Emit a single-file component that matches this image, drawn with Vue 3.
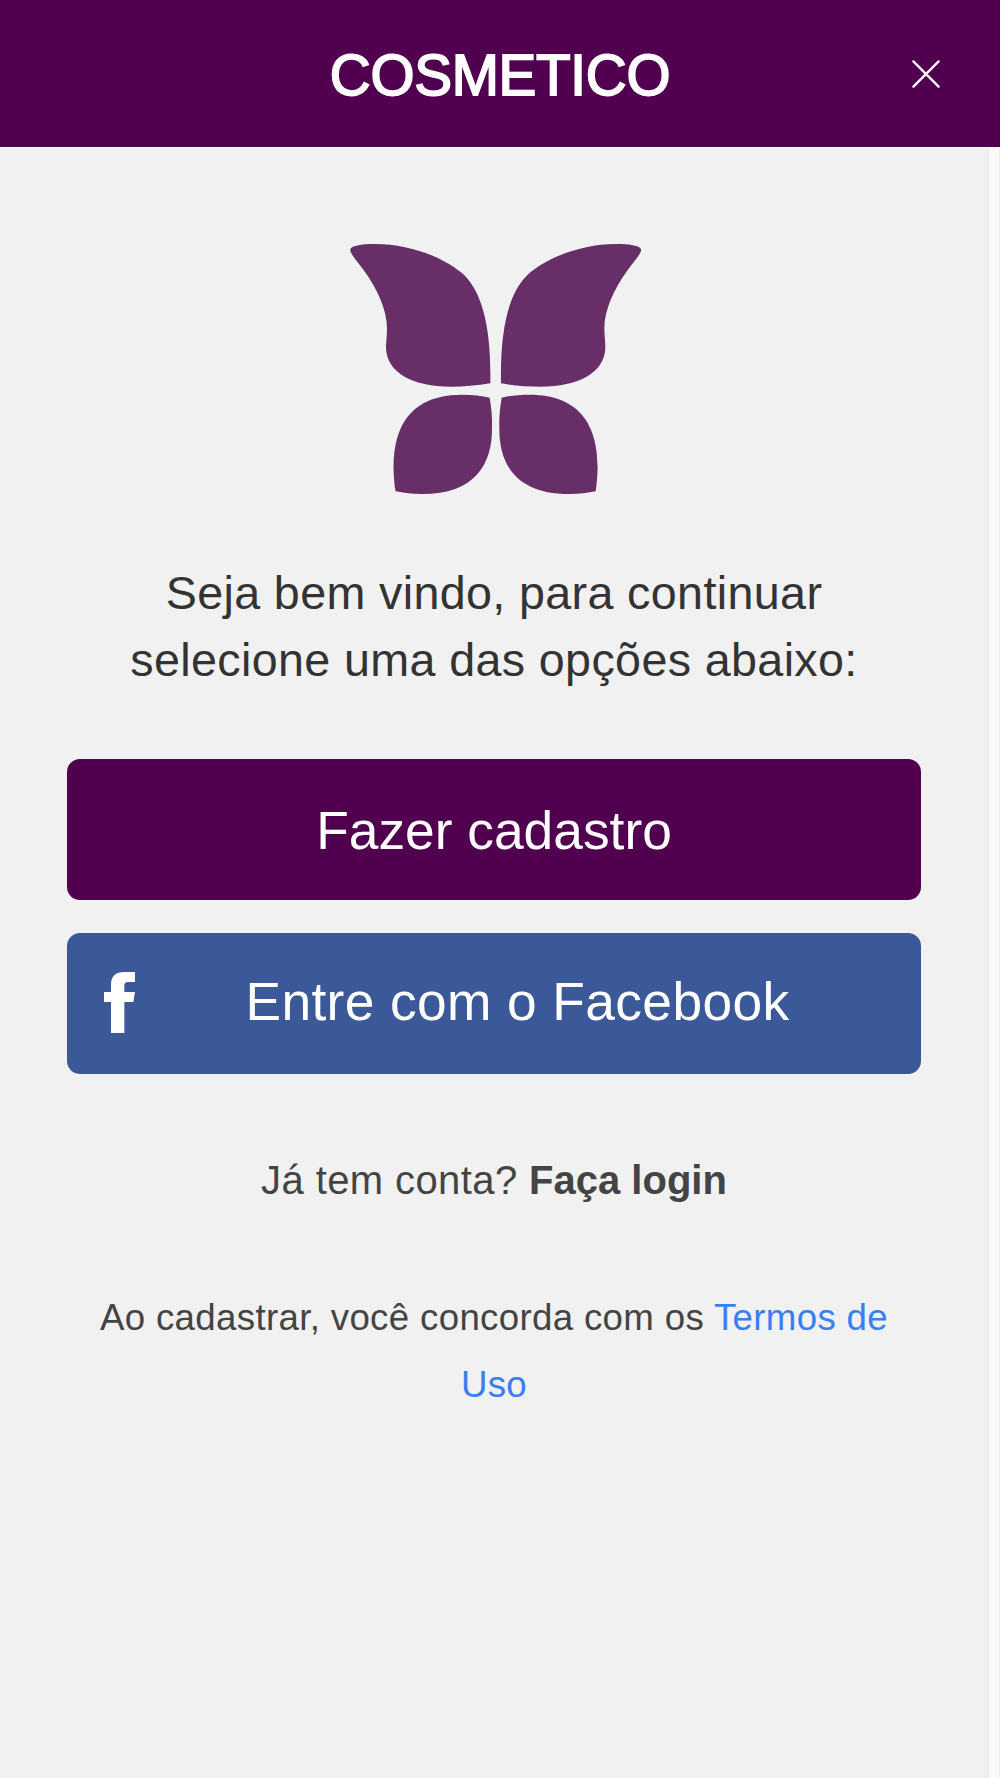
<script setup>
import { ref } from 'vue'

const title = ref('COSMETICO')
</script>

<template>
  <div class="screen">
    <header class="header">
      <h1>{{ title }}</h1>
      <button class="close" aria-label="Fechar">
        <svg viewBox="0 0 28 28" width="28" height="28">
          <path d="M1.4 1.4 26.6 26.6M26.6 1.4 1.4 26.6" />
        </svg>
      </button>
    </header>

    <div class="body">
      <main class="content">
        <svg class="logo" viewBox="26 39 876 756">
          <g id="wing">
            <path d="M30 58C32 48 60 42 105 42C200 42 300 77 362 127C425 180 453 290 450 460C410 467 370 470 330 470C220 470 138 430 137 352C137 335 140 315 140 295C140 240 110 175 72 123C50 93 27 68 30 58Z" />
            <path d="M448 503C453 533 456 562 455 590C457 705 402 792 245 792C215 792 190 789 166 784C145 640 175 494 365 494C395 494 425 497 448 503Z" />
          </g>
          <use href="#wing" transform="matrix(-1 0 0 1 932 0)" />
        </svg>

        <p class="welcome">Seja bem vindo, para continuar<br />selecione uma das opções abaixo:</p>

        <div class="actions">
          <button class="btn primary">Fazer cadastro</button>
          <button class="btn facebook">
            <svg class="fb-icon" viewBox="162 156 93 183">
              <path d="M183 339V246H162V216H183V194C183 169 197 156 222 156H255V186H234C226 186 223 190 223 197V216H255L250 246H223V339Z" />
            </svg>
            <span>Entre com o Facebook</span>
          </button>
        </div>

        <p class="login">Já tem conta? <b>Faça login</b></p>
        <p class="terms">Ao cadastrar, você concorda com os <a href="#">Termos de</a><br /><a href="#">Uso</a></p>
      </main>
      <div class="scroll-track"></div>
    </div>
  </div>
</template>

<style>
body {
  margin: 0;
  background: #f1f1f1;
}
</style>

<style scoped>
.screen {
  display: flex;
  flex-direction: column;
  height: 1778px;
  background: #f1f1f1;
  font-family: "Liberation Sans", Arial, sans-serif;
}

.header {
  display: grid;
  grid-template-columns: 120px 1fr 120px;
  align-items: center;
  height: 147px;
  background: #50004f;
  color: #fff;
}

.header h1 {
  grid-column: 2;
  margin: 0;
  padding-top: 4px;
  font-size: 56.67px;
  font-weight: 400;
  line-height: 1.2;
  letter-spacing: -0.3px;
  text-align: center;
  -webkit-text-stroke: 1.8px #fff;
}

.close {
  display: flex;
  width: 28px;
  height: 28px;
  margin-left: 32px;
  padding: 0;
  border: none;
  background: none;
}

.close path {
  fill: none;
  stroke: #fff;
  stroke-width: 2.3;
  stroke-linecap: round;
}

.body {
  display: flex;
  flex: 1;
  border-top: 1px solid #fbfbfb;
}

.content {
  display: flex;
  flex: 1;
  flex-direction: column;
  align-items: center;
  padding: 95px 67px 0;
}

.scroll-track {
  box-sizing: border-box;
  width: 12px;
  background: #fafafa;
  border-left: 1px solid #e9e9e9;
  border-right: 1px solid #ededed;
}

.logo {
  width: 292px;
  height: 252px;
  margin-left: 2px;
  overflow: visible;
  fill: #672e68;
}

.welcome {
  margin: 65px 0 0;
  color: #333;
  font-size: 46.67px;
  line-height: 67px;
  letter-spacing: 0.36px;
  text-align: center;
  white-space: nowrap;
}

.actions {
  display: flex;
  flex-direction: column;
  align-self: stretch;
  gap: 33px;
  margin-top: 65px;
}

.btn {
  height: 141px;
  padding: 2px 0 0;
  border: none;
  border-radius: 13px;
  color: #fff;
  font-family: inherit;
  font-size: 53.33px;
  line-height: 60px;
  cursor: pointer;
}

.btn.primary {
  background: #50004f;
}

.btn.facebook {
  display: flex;
  align-items: center;
  padding: 0 21px 3px 37px;
  background: #3b5998;
  letter-spacing: 0.38px;
}

.fb-icon {
  width: 31px;
  height: 61px;
  margin-top: 1px;
  fill: #fff;
}

.btn.facebook span {
  flex: 1;
  text-align: center;
}

.login {
  margin: 73px 0 0;
  color: #444;
  font-size: 40px;
  line-height: 67px;
  letter-spacing: 0.4px;
}

.login b {
  letter-spacing: 0;
}

.terms {
  width: 800px;
  margin: 70px 0 0;
  color: #444;
  font-size: 36.67px;
  line-height: 67px;
  letter-spacing: 0.33px;
  text-align: center;
}

.terms a {
  color: #387ef5;
  text-decoration: none;
}
</style>
